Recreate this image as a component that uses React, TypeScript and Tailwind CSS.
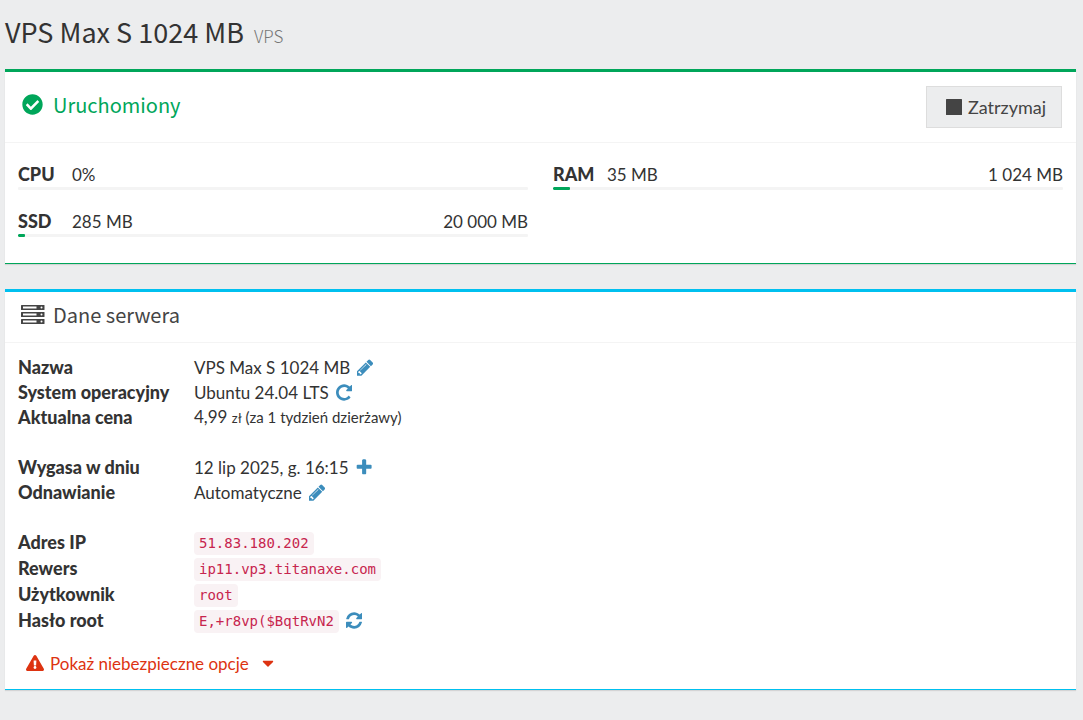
import type { ReactNode } from "react";
import { FaCheckCircle, FaExclamationTriangle, FaCaretDown } from "react-icons/fa";

const heading = "font-['Noto_Sans_CJK_SC',sans-serif]";

const PENCIL =
  "M363 1536l91-91-235-235-91 91v107h128v128h107zm523-928q0-22-22-22-10 0-17 7l-542 542q-7 7-7 17 0 22 22 22 10 0 17-7l542-542q7-7 7-17zm-54-192l416 416-832 832h-416v-416zm683 96q0 53-37 90l-166 166-416-416 166-165q36-38 90-38 53 0 91 38l235 234q37 39 37 91z";
const REPEAT =
  "M1536 256v448q0 26-19 45t-45 19h-448q-42 0-59-40-17-39 14-69l138-138q-148-137-349-137-104 0-198.500 40.500t-163.500 109.500-109.500 163.500-40.500 198.500 40.500 198.500 109.500 163.500 163.500 109.500 198.500 40.500q119 0 225-52t179-147q7-10 23-12 15 0 25 9l137 138q9 8 9.500 20.500t-7.500 22.500q-109 132-264 204.500t-327 72.500q-156 0-298-61t-245-164-164-245-61-298 61-298 164-245 245-164 298-61q147 0 284.500 55.500t244.500 156.500l130-129q29-31 70-14 39 17 39 59z";
const REFRESH =
  "M1511 1056q0 5-1 7-64 268-268 434.500t-478 166.500q-146 0-282.500-55t-243.500-157l-129 129q-19 19-45 19t-45-19-19-45v-448q0-26 19-45t45-19h448q26 0 45 19t19 45-19 45l-137 137q71 66 161 102t187 36q134 0 250-65t186-179q11-17 53-117 8-23 30-23h192q13 0 22.500 9.500t9.500 22.500zm25-800v448q0 26-19 45t-45 19h-448q-26 0-45-19t-19-45 19-45l138-138q-148-137-349-137-134 0-250 65t-186 179q-11 17-53 117-8 23-30 23h-199q-13 0-22.500-9.500t-9.500-22.500v-7q65-268 270-434.500t480-166.500q146 0 284 55.500t245 156.500l130-129q19-19 45-19t45 19 19 45z";
const PLUS =
  "M1472 736v192q0 40-28 68t-68 28h-416v416q0 40-28 68t-68 28h-192q-40 0-68-28t-28-68v-416h-416q-40 0-68-28t-28-68v-192q0-40 28-68t68-28h416v-416q0-40 28-68t68-28h192q40 0 68 28t28 68v416h416q40 0 68 28t28 68z";

function ServerIcon() {
  return (
    <svg viewBox="0 0 24 19" className="h-[19px] w-6 shrink-0" aria-hidden="true">
      {[0, 7, 14].map((y) => (
        <g key={y}>
          <rect x="0" y={y} width="23.500" height="5" rx="0.500" fill="#444" />
          <rect x="2" y={y + 1.5} width="13.500" height="2" fill="#fff" />
          <rect x="19.500" y={y + 1.5} width="2" height="2" rx="1" fill="#fff" />
        </g>
      ))}
    </svg>
  );
}

function Meter({ name, value, total, percent }: { name: string; value: string; total?: string; percent: number }) {
  return (
    <div className="h-[47px]">
      <div className="flex h-[25px] items-start">
        <b className="w-[54px] font-black">{name}</b>
        <span className="flex-1 text-[17px]">{value}</span>
        {total && <span className="text-[17px]">{total}</span>}
      </div>
      <div
        role="progressbar"
        aria-label={name}
        aria-valuenow={percent}
        className="h-[3px] overflow-hidden rounded-[1px] bg-[#f4f4f4]"
      >
        <div className="h-full rounded-[1px] bg-[#00a65a]" style={{ width: `${percent}%` }} />
      </div>
    </div>
  );
}

function Row({ label, children }: { label: string; children?: ReactNode }) {
  return (
    <div className="flex items-center">
      <dt className="w-[176px] shrink-0 font-black">{label}</dt>
      <dd className="flex items-center gap-[7px] text-[17px]">{children}</dd>
    </div>
  );
}

function IconLink({ label, d }: { label: string; d: string }) {
  return (
    <a href="#" aria-label={label} className="text-[#3c8dbc]">
      <svg viewBox="0 0 1536 1792" className="h-[19px]" fill="currentColor" aria-hidden="true">
        <path d={d} />
      </svg>
    </a>
  );
}

function Code({ children }: { children: ReactNode }) {
  return (
    <code className="mt-[3px] flex h-[23px] items-center rounded bg-[#f9f2f4] px-[5px] font-['DejaVu_Sans_Mono',monospace] text-[14px] text-[#c7254e]">
      {children}
    </code>
  );
}

export default function App() {
  return (
    <main className="min-h-screen bg-[#ecedee] pr-[7px] pl-[5px] font-[Lato,sans-serif] text-[18px] leading-[25px] text-[#333]">
      <header className={`flex h-[69px] items-baseline gap-[10px] pt-3 leading-[40px] ${heading}`}>
        <h1 className="text-[27px]">VPS Max S 1024 MB</h1>
        <small className="text-[17px] font-light text-[#777]">VPS</small>
      </header>

      <section className="border-t-[3px] border-[#00a65a] bg-white shadow-[0_1px_1px_rgba(0,0,0,0.100)]">
        <div className="flex h-[71px] items-center justify-between border-b border-[#f4f4f4] pr-[14px] pl-[17px]">
          <h2 className={`flex items-center gap-[10px] pb-[5px] text-[20px] text-[#00a65a] ${heading}`}>
            <FaCheckCircle className="size-[21px]" />
            Uruchomiony
          </h2>
          <button type="button" className="flex h-[42px] items-center gap-[6px] border border-[#ddd] bg-[#ecedee] pr-[15px] pl-[19px] text-[#444]">
            <svg viewBox="0 0 16 16" className="size-4" aria-hidden="true">
              <rect width="16" height="16" rx="0.500" fill="#444" />
            </svg>
            Zatrzymaj
          </button>
        </div>
        <div className="grid grid-cols-2 gap-x-[25px] border-b border-[#00a65a] px-[13px] pt-[19px] pb-[7px]">
          <Meter name="CPU" value="0%" percent={0} />
          <Meter name="RAM" value="35 MB" total="1 024 MB" percent={3.4} />
          <Meter name="SSD" value="285 MB" total="20 000 MB" percent={1.4} />
        </div>
      </section>

      <section className="mt-[25px] border-t-[3px] border-[#00c0ef] bg-white shadow-[0_1px_1px_rgba(0,0,0,0.100)]">
        <h2 className={`flex h-[51px] items-center gap-2 border-b border-[#f4f4f4] pb-[5px] pl-4 text-[20px] text-[#444] ${heading}`}>
          <ServerIcon />
          Dane serwera
        </h2>
        <div className="border-b border-[#00c0ef] px-[13px] pt-3 pb-[10px]">
          <dl>
            <div className="grid auto-rows-[25px]">
              <Row label="Nazwa">
                VPS Max S 1024 MB
                <IconLink label="Zmień nazwę" d={PENCIL} />
              </Row>
              <Row label="System operacyjny">
                Ubuntu 24.04 LTS
                <IconLink label="Zmień system" d={REPEAT} />
              </Row>
              <Row label="Aktualna cena">
                <span>4,99 <small className="text-[15px]"><small className="text-[13px]">zł</small> (za 1 tydzień dzierżawy)</small></span>
              </Row>
            </div>
            <div className="mt-[25px] grid auto-rows-[25px]">
              <Row label="Wygasa w dniu">
                12 lip 2025, g. 16:15
                <IconLink label="Przedłuż" d={PLUS} />
              </Row>
              <Row label="Odnawianie">
                Automatyczne
                <IconLink label="Zmień odnawianie" d={PENCIL} />
              </Row>
            </div>
            <div className="mt-6 grid auto-rows-[26px]">
              <Row label="Adres IP"><Code>51.83.180.202</Code></Row>
              <Row label="Rewers"><Code>ip11.vp3.titanaxe.com</Code></Row>
              <Row label="Użytkownik"><Code>root</Code></Row>
              <Row label="Hasło root">
                <Code>E,+r8vp($BqtRvN2</Code>
                <IconLink label="Zmień hasło" d={REFRESH} />
              </Row>
            </div>
          </dl>
          <button type="button" className="mt-[14px] ml-2 flex h-8 items-center gap-[6px] text-[17px] text-[#dd3311]">
            <FaExclamationTriangle className="size-[18px]" />
            Pokaż niebezpieczne opcje
            <FaCaretDown className="ml-1 size-[18px]" />
          </button>
        </div>
      </section>
    </main>
  );
}
